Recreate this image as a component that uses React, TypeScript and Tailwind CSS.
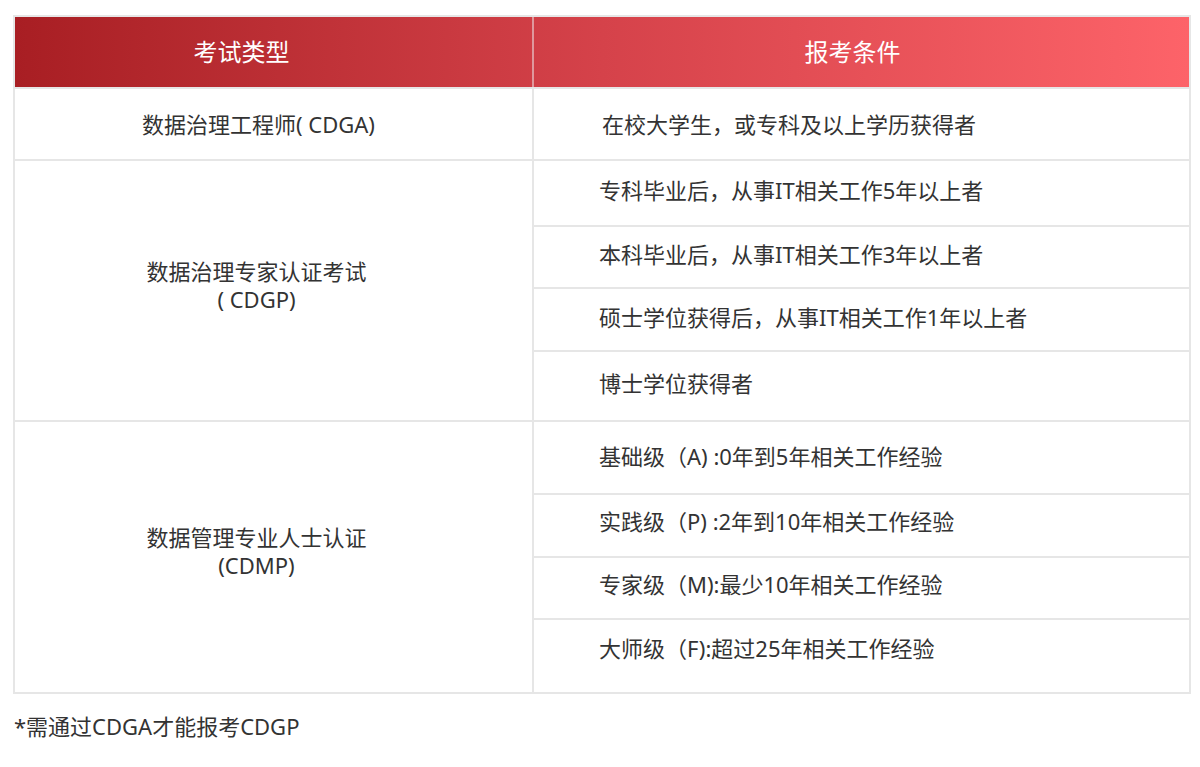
import React from "react";

type Row = { text: string; h: string; pb: string };
type Group = {
  title: React.ReactNode;
  rows: Row[];
};

const groups: Group[] = [
  {
    title: (
      <>
        数据治理专家认证考试
        <br />( CDGP)
      </>
    ),
    rows: [
      { text: "专科毕业后，从事IT相关工作5年以上者", h: "h-[66px]", pb: "pb-[6px]" },
      { text: "本科毕业后，从事IT相关工作3年以上者", h: "h-[62px]", pb: "pb-[6px]" },
      { text: "硕士学位获得后，从事IT相关工作1年以上者", h: "h-[63px]", pb: "pb-[4px]" },
      { text: "博士学位获得者", h: "h-[68px]", pb: "pb-[6px]" },
    ],
  },
  {
    title: (
      <>
        数据管理专业人士认证
        <br />
        (CDMP)
      </>
    ),
    rows: [
      { text: "基础级（A) :0年到5年相关工作经验", h: "h-[73px]", pb: "pb-[2px]" },
      { text: "实践级（P) :2年到10年相关工作经验", h: "h-[63px]", pb: "pb-[8px]" },
      { text: "专家级（M):最少10年相关工作经验", h: "h-[62px]", pb: "pb-[8px]" },
      { text: "大师级（F):超过25年相关工作经验", h: "h-[72px]", pb: "pb-[16px]" },
    ],
  },
];

export default function App() {
  return (
    <div
      className="w-[1200px] h-[767px] bg-white pt-[15px] pl-[13px] text-[#333333]"
      style={{ fontFamily: '"Noto Sans", "Noto Sans CJK SC", sans-serif' }}
    >
      <div className="w-[1178px] border-2 border-[#e6e6e6] text-[22px]">
        {/* header */}
        <div className="flex h-[72px] border-b-2 border-[#e6e6e6] bg-linear-to-r from-[#a81e23] via-[#d5424a] to-[#fd6369] text-white text-[24px]">
          <div className="w-[519px] flex items-center justify-center pr-[64px] border-r-2 border-[#e9d6d7]/60">
            考试类型
          </div>
          <div className="flex-1 flex items-center justify-center pr-[18px]">报考条件</div>
        </div>

        {/* CDGA */}
        <div className="flex h-[72px] border-b-2 border-[#e6e6e6]">
          <div className="w-[519px] flex items-center justify-center pr-[30px] border-r-2 border-[#e6e6e6]">
            数据治理工程师( CDGA)
          </div>
          <div className="flex-1 flex items-center pl-[68px]">
            在校大学生，或专科及以上学历获得者
          </div>
        </div>

        {groups.map((g, gi) => (
          <div
            key={gi}
            className={
              gi < groups.length - 1 ? "flex border-b-2 border-[#e6e6e6]" : "flex"
            }
          >
            <div className="w-[519px] flex items-center justify-center text-center leading-[28px] pr-[34px] pb-[12px] border-r-2 border-[#e6e6e6]">
              <div>{g.title}</div>
            </div>
            <div className="flex-1 flex flex-col">
              {g.rows.map((r, ri) => (
                <div
                  key={ri}
                  className={
                    r.h +
                    " " +
                    r.pb +
                    " flex items-center pl-[65px]" +
                    (ri < g.rows.length - 1 ? " border-b-2 border-[#e6e6e6]" : "")
                  }
                >
                  {r.text}
                </div>
              ))}
            </div>
          </div>
        ))}
      </div>

      <div className="mt-[16px] ml-[1px] text-[22px]">*需通过CDGA才能报考CDGP</div>
    </div>
  );
}
